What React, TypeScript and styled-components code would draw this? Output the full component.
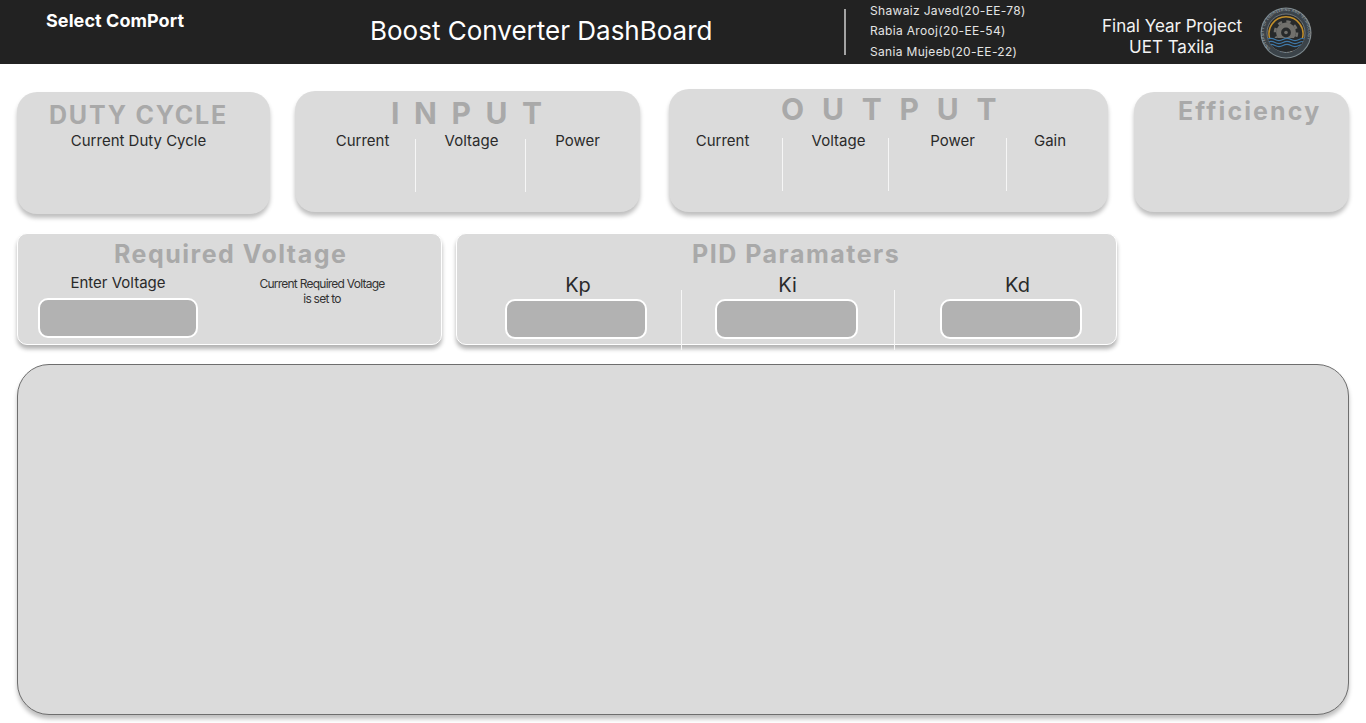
import React from "react";
import styled, { createGlobalStyle } from "styled-components";

const Global = createGlobalStyle`
  html, body { margin: 0; padding: 0; background: #fff; }
  body { font-family: Inter, "Liberation Sans", sans-serif; overflow: hidden; }
  * { box-sizing: border-box; }
`;

const Page = styled.div`
  width: 1366px;
  height: 723px;
  display: flex;
  flex-direction: column;
`;

const Header = styled.header`
  height: 64px;
  background: #222222;
  color: #fff;
  display: flex;
  align-items: flex-start;
  flex: none;
`;

const PortLabel = styled.div`
  width: 370px;
  padding: 10px 0 0 46px;
  font-size: 18px;
  line-height: 22px;
  font-weight: 700;
  letter-spacing: 0.07px;
`;

const AppTitle = styled.h1`
  margin: 0;
  width: 474px;
  padding-top: 14px;
  font-size: 26px;
  line-height: 34px;
  font-weight: 400;
`;

const Rule = styled.div`
  width: 2px;
  height: 46px;
  margin-top: 9px;
  background: #a3a3a3;
  flex: none;
`;

const Names = styled.div`
  width: 256px;
  padding: 1px 0 0 24px;
  color: #e4e4e4;
  font-size: 12px;
  line-height: 20.4px;
  letter-spacing: 0.33px;
  white-space: nowrap;
`;

const Project = styled.div`
  width: 139px;
  padding-top: 16px;
  text-align: center;
  font-size: 17px;
  line-height: 21px;
  color: #f2f2f2;
  white-space: nowrap;
`;

const LogoSlot = styled.svg`
  margin: 7px 0 0 19px;
  flex: none;
`;

const TopRow = styled.section`
  height: 125px;
  padding-left: 17px;
  display: flex;
  align-items: flex-start;
  flex: none;
  margin-top: 25px;
`;

const Card = styled.div<{ $w: number; $h: number; $top?: number; $gap?: number }>`
  width: ${(p) => p.$w}px;
  height: ${(p) => p.$h}px;
  margin-top: ${(p) => p.$top ?? 0}px;
  margin-right: ${(p) => p.$gap ?? 0}px;
  flex: none;
  background: #dbdbdb;
  border-radius: 20px;
  box-shadow: 0 4px 4px rgba(0, 0, 0, 0.25);
`;

const CardTitle = styled.div<{ $x: number; $y: number; $size: number; $ls: number }>`
  padding-left: ${(p) => p.$x}px;
  padding-top: ${(p) => p.$y}px;
  font-size: ${(p) => p.$size}px;
  line-height: 30px;
  font-weight: 700;
  letter-spacing: ${(p) => p.$ls}px;
  color: #a9a9a9;
  white-space: nowrap;
`;

const Metrics = styled.div<{ $top: number }>`
  display: flex;
  align-items: flex-start;
  margin-top: ${(p) => p.$top}px;
`;

const Metric = styled.div<{ $w: number; $pl?: number; $pr?: number }>`
  width: ${(p) => p.$w}px;
  padding-left: ${(p) => p.$pl ?? 0}px;
  padding-right: ${(p) => p.$pr ?? 0}px;
  flex: none;
  text-align: center;
  font-size: 15px;
  line-height: 20px;
  color: #2a2a2a;
  white-space: nowrap;
`;

const VLine = styled.div<{ $h: number; $top: number }>`
  width: 1px;
  height: ${(p) => p.$h}px;
  margin-top: ${(p) => p.$top}px;
  background: #f6f6f6;
  flex: none;
`;

const DutyLabel = styled.div`
  margin-top: 1px;
  padding-right: 10px;
  text-align: center;
  font-size: 15px;
  line-height: 20px;
  color: #2a2a2a;
`;

const MidRow = styled.section`
  height: 112px;
  margin-top: 19px;
  padding-left: 17px;
  display: flex;
  gap: 14px;
  flex: none;
`;

const FormCard = styled.div<{ $w: number }>`
  width: ${(p) => p.$w}px;
  height: 112px;
  flex: none;
  background: #dbdbdb;
  border-radius: 10px;
  border: 1px solid #ffffff;
  box-shadow: 0 4px 4px rgba(0, 0, 0, 0.3);
`;

const FormBody = styled.div`
  display: flex;
  align-items: flex-start;
  padding-top: 4px;
`;

const VoltageField = styled.div`
  width: 160px;
  margin-left: 20px;
  flex: none;
`;

const FieldLabel = styled.div`
  font-size: 15px;
  line-height: 20px;
  text-align: center;
  color: #2a2a2a;
  white-space: nowrap;
`;

const Input = styled.div<{ $w: number; $mt: number }>`
  width: ${(p) => p.$w}px;
  height: 40px;
  margin-top: ${(p) => p.$mt}px;
  background: #b2b2b2;
  border: 2px solid #ffffff;
  border-radius: 10px;
`;

const Note = styled.div`
  width: 200px;
  margin-left: 24px;
  padding-top: 3px;
  flex: none;
  text-align: center;
  font-size: 12px;
  line-height: 15px;
  letter-spacing: -0.75px;
  color: #333333;
`;

const PidRow = styled.div`
  display: flex;
  align-items: flex-start;
  margin-top: 2px;
`;

const PidField = styled.div<{ $w: number; $pl: number }>`
  width: ${(p) => p.$w}px;
  padding-left: ${(p) => p.$pl}px;
  flex: none;
`;

const PidLabel = styled.div<{ $shift: number }>`
  width: 141px;
  padding-left: ${(p) => p.$shift}px;
  font-size: 20px;
  line-height: 28px;
  text-align: center;
  color: #2a2a2a;
`;

const ChartPanel = styled.section`
  width: 1332px;
  height: 351px;
  margin: 19px 0 0 17px;
  flex: none;
  background: #dbdbdb;
  border: 1px solid #6e6e6e;
  border-radius: 32px;
  box-shadow: 0 4px 4px rgba(0, 0, 0, 0.25);
`;

const Logo = () => (
  <LogoSlot width="52" height="52" viewBox="0 0 52 52">
    <defs>
      <path id="ringTop" d="M3.900 26a22.100 22.100 0 1 1 44.200 0a22.100 22.100 0 1 1 -44.200 0" />
      <path id="ringBottom" d="M6 26a20 20 0 0 0 40 0" />
      <clipPath id="innerDisc">
        <circle cx="26" cy="26" r="19" />
      </clipPath>
    </defs>
    <circle cx="26" cy="26" r="25.500" fill="#7d898e" />
    <circle cx="26" cy="26" r="24.400" fill="#3b4349" />
    <circle cx="26" cy="26" r="19" fill="#27292a" stroke="#8d9499" strokeWidth="0.7" />
    <g transform="rotate(-45 26 26)">
      <text fontFamily="Inter, sans-serif" fontSize="3.400" fill="#aeb6ba" letterSpacing="0.25">
        <textPath href="#ringTop">UNIVERSITY OF ENGINEERING AND TECHNOLOGY</textPath>
      </text>
    </g>
    <text fontFamily="Inter, sans-serif" fontSize="3.400" fill="#aeb6ba" letterSpacing="0.3" textAnchor="middle">
      <textPath href="#ringBottom" startOffset="50%">TAXILA</textPath>
    </text>
    <path d="M9.800 32a17 17 0 1 1 32.400 0" fill="none" stroke="#c4902a" strokeWidth="1.500" />
    <circle cx="26" cy="25.500" r="7.400" fill="none" stroke="#71706c" strokeWidth="5" />
    <circle cx="26" cy="25.500" r="11" fill="none" stroke="#71706c" strokeWidth="2.600" strokeDasharray="4.300 4.340" />
    <circle cx="26" cy="25.500" r="1.800" fill="#71706c" />
    <g clipPath="url(#innerDisc)">
      <rect x="6" y="31" width="40" height="16" fill="#27292a" />
      <path
        d="M7 32.500c3-1.600 5-1.600 8 0s5 1.600 8 0 5-1.600 8 0 5 1.600 8 0 4-1.600 6 0M7 35.500c3-1.600 5-1.600 8 0s5 1.600 8 0 5-1.600 8 0 5 1.600 8 0 4-1.600 6 0M7 38.500c3-1.600 5-1.600 8 0s5 1.600 8 0 5-1.600 8 0 5 1.600 8 0 4-1.600 6 0"
        fill="none"
        stroke="#3f78a8"
        strokeWidth="1.300"
      />
    </g>
  </LogoSlot>
);

export default function App() {
  return (
    <Page>
      <Global />
      <Header>
        <PortLabel>Select ComPort</PortLabel>
        <AppTitle>Boost Converter DashBoard</AppTitle>
        <Rule />
        <Names>
          <div>Shawaiz Javed(20-EE-78)</div>
          <div>Rabia Arooj(20-EE-54)</div>
          <div>Sania Mujeeb(20-EE-22)</div>
        </Names>
        <Project>
          <div>Final Year Project</div>
          <div>UET Taxila</div>
        </Project>
        <Logo />
      </Header>

      <TopRow>
        <Card $w={253} $h={122} $top={3} $gap={25}>
          <CardTitle $x={32} $y={8} $size={25} $ls={1.8}>DUTY CYCLE</CardTitle>
          <DutyLabel>Current Duty Cycle</DutyLabel>
        </Card>
        <Card $w={345} $h={121} $top={2} $gap={29}>
          <CardTitle $x={96} $y={7} $size={30} $ls={14.6}>INPUT</CardTitle>
          <Metrics $top={3}>
            <Metric $w={120} $pl={15}>Current</Metric>
            <VLine $h={53} $top={8} />
            <Metric $w={109} $pl={2}>Voltage</Metric>
            <VLine $h={53} $top={8} />
            <Metric $w={103}>Power</Metric>
          </Metrics>
        </Card>
        <Card $w={439} $h={123} $gap={26}>
          <CardTitle $x={112} $y={5} $size={30} $ls={17.8}>OUTPUT</CardTitle>
          <Metrics $top={7}>
            <Metric $w={113} $pr={6}>Current</Metric>
            <VLine $h={53} $top={7} />
            <Metric $w={105} $pl={6}>Voltage</Metric>
            <VLine $h={53} $top={7} />
            <Metric $w={117} $pl={12} $pr={2}>Power</Metric>
            <VLine $h={53} $top={7} />
            <Metric $w={88} $pr={2}>Gain</Metric>
          </Metrics>
        </Card>
        <Card $w={215} $h={120} $top={3}>
          <CardTitle $x={44} $y={4} $size={25} $ls={2.1}>Efficiency</CardTitle>
        </Card>
      </TopRow>

      <MidRow>
        <FormCard $w={425}>
          <CardTitle $x={96} $y={5} $size={25} $ls={1.5}>Required Voltage</CardTitle>
          <FormBody>
            <VoltageField>
              <FieldLabel>Enter Voltage</FieldLabel>
              <Input $w={160} $mt={5} />
            </VoltageField>
            <Note>
              Current Required Voltage
              <br />
              is set to
            </Note>
          </FormBody>
        </FormCard>
        <FormCard $w={661}>
          <CardTitle $x={235} $y={5} $size={25} $ls={1.5}>PID Paramaters</CardTitle>
          <PidRow>
            <PidField $w={224} $pl={48}>
              <PidLabel $shift={5}>Kp</PidLabel>
              <Input $w={142} $mt={0} />
            </PidField>
            <VLine $h={60} $top={19} />
            <PidField $w={212} $pl={33}>
              <PidLabel $shift={4}>Ki</PidLabel>
              <Input $w={143} $mt={0} />
            </PidField>
            <VLine $h={60} $top={19} />
            <PidField $w={200} $pl={45}>
              <PidLabel $shift={14}>Kd</PidLabel>
              <Input $w={142} $mt={0} />
            </PidField>
          </PidRow>
        </FormCard>
      </MidRow>

      <ChartPanel />
    </Page>
  );
}
